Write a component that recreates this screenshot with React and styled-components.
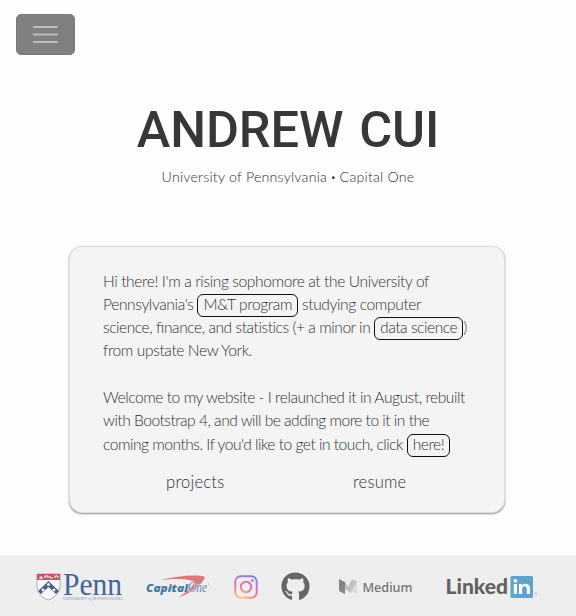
import React from "react";
import styled, { createGlobalStyle } from "styled-components";
import { FaGithub } from "react-icons/fa";

const GlobalStyle = createGlobalStyle`
  * { box-sizing: border-box; }
  body { margin: 0; background: #fdfdfd; }
`;
const Page = styled.div`
  height: 616px;
  display: flex;
  flex-direction: column;
  overflow: hidden;
  color: #303234;
  font-family: Lato, "Liberation Sans", sans-serif;
`;
const Nav = styled.nav`
  height: 68px;
  padding: 14px 16px;
`;
const MenuButton = styled.button`
  display: flex;
  align-items: center;
  justify-content: center;
  width: 59px;
  height: 41px;
  padding: 0 0 1px;
  background: #808080;
  border: 1px solid #7a7a7a;
  border-radius: 5px;
`;
const Header = styled.header`
  height: 177.5px;
  padding-top: 32px;
  text-align: center;
`;
const Title = styled.h1`
  margin: 0;
  font: 500 50.5px/60px Roboto, sans-serif;
  letter-spacing: ${(p) => p.$spacing}px;
  word-spacing: 3.5px;
  color: #373737;
  white-space: nowrap;
`;
const Subtitle = styled.p`
  margin: 6px 0 0;
  font-size: 14.2px;
  font-weight: 300;
  line-height: 22px;
  letter-spacing: 0.22px;
`;
const Bullet = styled.span`
  font-family: Roboto, sans-serif;
  font-size: 12px;
  font-weight: 400;
  line-height: 1;
`;
const Card = styled.main`
  width: 436px;
  height: 267px;
  margin-left: 69px;
  padding: 23px 0 0 33px;
  background: #f4f4f4;
  border: 1px solid #dedee0;
  border-radius: 13px;
  box-shadow: 0 1px 2px #92929a;
`;
const Paragraph = styled.p`
  margin: 0 0 23.3px;
  font-size: 15.55px;
  font-weight: 300;
  line-height: 23.3px;
`;
const Line = styled.span`
  display: block;
  white-space: nowrap;
  letter-spacing: ${(p) => p.$spacing || 0}px;
`;
const Ligature = styled.span`
  font-feature-settings: "liga" 1;
`;
const Pill = styled.a`
  padding: 0 5px 3px;
  border: 1px solid #111;
  border-radius: 6px;
`;
const CardLinks = styled.div`
  display: grid;
  grid-template-columns: 1fr 1fr;
  width: 369px;
  margin-top: -8px;
  text-align: center;
  font-size: 16.6px;
  font-weight: 300;
  line-height: 22px;
  letter-spacing: 0.2px;
`;
const Footer = styled.footer`
  display: flex;
  align-items: center;
  height: 61px;
  margin-top: auto;
  padding: 2px 0 0 36px;
  background: #eeeeee;
`;
const Logo = styled.a`
  display: flex;
  width: ${(p) => p.$width}px;
  margin-right: ${(p) => p.$gap || 0}px;
  color: #666;
  svg { overflow: visible; }
`;

const PennLogo = () => (
  <svg width="88" height="30" viewBox="0 0 88 30">
    <path d="M1 2H24V14C24 22 17 26 12.5 28C7 26 1 22 1 14Z" fill="#fafafa" stroke="#8b9aba" strokeWidth=".8" />
    <path d="M1 2H24V8H1Z" fill="#c45561" />
    <path d="M3 6h4M5 4v3M9 6V4h3v2M14 4v2h3M19 6V4h3v2" stroke="#fff" strokeWidth="1" fill="none" />
    <path d="M2 19L12.5 9L23 19L20 22L12.5 15L5 22Z" fill="#4a5f8c" />
    <g fill="#fafafa"><circle cx="12.5" cy="12.5" r="1.5" /><circle cx="7" cy="18" r="1.4" /><circle cx="18" cy="18" r="1.4" /></g>
    <text x="27" y="22.5" textLength="59" lengthAdjust="spacingAndGlyphs" fontFamily="Liberation Serif, serif" fontSize="31" fill="#41649e">Penn</text>
    <text x="27" y="28" textLength="60" lengthAdjust="spacingAndGlyphs" fontFamily="Liberation Serif, serif" fontSize="4.2" fill="#7f91b5">UNIVERSITY <tspan fontStyle="italic">of</tspan> PENNSYLVANIA</text>
  </svg>
);
const CapitalLogo = () => (
  <svg width="66" height="26" viewBox="0 0 66 26">
    <path d="M15 6C29 2.5 50 0 58 2.5C61 4 54 11 47 16C42 19.5 37 22 33 23C39 19 46 14 48 9C47 4.5 30 4 15 6Z" fill="#e07779" />
    <text x="0" y="18" textLength="42" lengthAdjust="spacingAndGlyphs" fontFamily="Open Sans, sans-serif" fontStyle="italic" fontWeight="800" fontSize="11" fill="#427b9f">Capital</text>
    <text x="42" y="18" textLength="19" lengthAdjust="spacingAndGlyphs" fontFamily="Liberation Serif, serif" fontStyle="italic" fontSize="14" stroke="#eeeeee" strokeWidth="1" paintOrder="stroke" fill="#568aa9">One</text>
    <circle cx="62.5" cy="10" r=".6" fill="#79a0b8" />
  </svg>
);
const InstagramLogo = () => (
  <svg width="24" height="24" viewBox="0 0 24 24" fill="none">
    <defs>
      <radialGradient id="insta" cx="6" cy="26" r="27" gradientUnits="userSpaceOnUse">
        <stop stopColor="#ffdc73" /><stop offset=".25" stopColor="#ffb774" /><stop offset=".52" stopColor="#ef789c" /><stop offset=".8" stopColor="#c676d3" /><stop offset="1" stopColor="#8580df" />
      </radialGradient>
    </defs>
    <rect x="1.3" y="1.3" width="21.4" height="21.4" rx="5.2" stroke="url(#insta)" strokeWidth="1.9" />
    <circle cx="12" cy="12" r="5.2" stroke="url(#insta)" strokeWidth="2" />
    <circle cx="18.3" cy="5.7" r="1.4" fill="#bf70ca" />
  </svg>
);
const MediumLogo = () => (
  <svg width="75" height="18" viewBox="0 0 75 18">
    <path d="M0 1L6 4V16L0 13Z" fill="#858585" />
    <path d="M6 4L12 14L6 11Z" fill="#aaa" />
    <path d="M6 4L9 9L13 1L18 3.5L12 15L6 11Z" fill="#c2c2c2" />
    <path d="M18 3.5V16L12 13Z" fill="#dcdcdc" />
    <text x="23.5" y="13.5" textLength="50" lengthAdjust="spacingAndGlyphs" fontFamily="Noto Sans, sans-serif" fontWeight="500" fontSize="13.2" fill="#737373">Medium</text>
  </svg>
);
const LinkedInLogo = () => (
  <svg width="92" height="24" viewBox="0 0 92 24">
    <text x="-0.5" y="18.8" textLength="62.5" lengthAdjust="spacingAndGlyphs" fontFamily="Lato, sans-serif" fontWeight="900" fontSize="20.5" fill="#626262">Linked</text>
    <rect x="64.5" y="1" width="22.5" height="22" rx="1.5" fill="#5ba4cd" />
    <g fill="#fff"><circle cx="69.4" cy="5.8" r="1.9" /><path d="M67.8 9H71V19H67.8ZM73 9H76V10.5C78.5 7.2 84 8.6 84 13V19H80.8V13.8C80.8 10.4 76.2 10.6 76.2 13.8V19H73Z" /></g>
    <circle cx="89.8" cy="18.7" r="1.2" fill="none" stroke="#bbb" strokeWidth=".7" />
  </svg>
);

export default function App() {
  return (
    <>
      <GlobalStyle />
      <Page>
        <Nav>
          <MenuButton aria-label="Menu">
            <svg width="25" height="19" viewBox="0 0 25 19" stroke="#bdbdbd" strokeWidth="2" strokeLinecap="round">
              <path d="M1 2H24M1 9.5H24M1 17H24" />
            </svg>
          </MenuButton>
        </Nav>
        <Header>
          <Title $spacing={-0.1}>ANDREW CUI</Title>
          <Subtitle>University of Pennsylvania <Bullet>•</Bullet> Capital One</Subtitle>
        </Header>
        <Card>
          <Paragraph>
            <Line $spacing={-0.375}>Hi there! I'm a rising sophomore at the University of</Line>
            <Line $spacing={-0.36}>Pennsylvania's <Pill>M&amp;T program</Pill> studying computer</Line>
            <Line $spacing={-0.44}>science, <Ligature>fi</Ligature>nance, and statistics (+ a minor in <Pill>data science</Pill>)</Line>
            <Line $spacing={-0.386}>from upstate New York.</Line>
          </Paragraph>
          <Paragraph>
            <Line $spacing={-0.44}>Welcome to my website - I relaunched it in August, rebuilt</Line>
            <Line $spacing={-0.49}>with Bootstrap 4, and will be adding more to it in the</Line>
            <Line $spacing={-0.48}>coming months. If you'd like to get in touch, click <Pill>here!</Pill></Line>
          </Paragraph>
          <CardLinks><a>projects</a><a>resume</a></CardLinks>
        </Card>
        <Footer>
          <Logo $width={88} $gap={22}><PennLogo /></Logo>
          <Logo $width={66} $gap={22}><CapitalLogo /></Logo>
          <Logo $width={24} $gap={23}><InstagramLogo /></Logo>
          <Logo $width={30} $gap={28}><FaGithub size={29} /></Logo>
          <Logo $width={75} $gap={32}><MediumLogo /></Logo>
          <Logo $width={92}><LinkedInLogo /></Logo>
        </Footer>
      </Page>
    </>
  );
}
